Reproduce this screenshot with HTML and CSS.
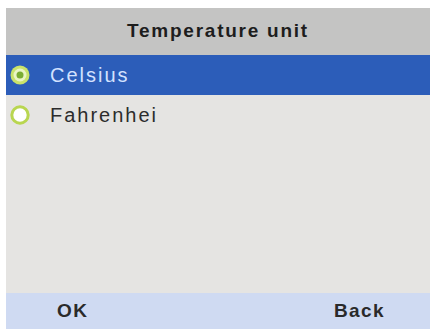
FILE: index.html
```html
<!DOCTYPE html>
<html>
<head>
<meta charset="utf-8">
<link rel="stylesheet" href="styles.css">
</head>
<body>
<div class="screen">
  <div class="header">Temperature unit</div>
  <div class="list">
    <div class="row selected">
      <svg class="radio" width="22" height="22" viewBox="0 0 22 22">
        <circle cx="11" cy="11" r="9.5" fill="#c9e36a"/>
        <circle cx="11" cy="11" r="6.5" fill="#e9f5c4"/>
        <circle cx="11" cy="11" r="3.5" fill="#7aad33"/>
      </svg>
      <span class="label">Celsius</span>
    </div>
    <div class="row">
      <svg class="radio" width="22" height="22" viewBox="0 0 22 22">
        <circle cx="11" cy="11" r="8.2" fill="#ffffff" stroke="#b9d650" stroke-width="3"/>
      </svg>
      <span class="label">Fahrenhei</span>
    </div>
  </div>
  <div class="footer">
    <span class="softkey">OK</span>
    <span class="softkey">Back</span>
  </div>
</div>
</body>
</html>
```

FILE: styles.css
```css
html, body {
  margin: 0;
  padding: 0;
  background: #ffffff;
}
body {
  width: 434px;
  height: 329px;
  overflow: hidden;
}
.screen {
  margin: 8px 4px 0 6px;
  height: 321px;
  display: flex;
  flex-direction: column;
  background: #e5e4e2;
  font-family: "Liberation Sans", Arial, sans-serif;
}
.header {
  height: 47px;
  background: #c4c4c3;
  display: flex;
  align-items: center;
  justify-content: center;
  font-size: 19px;
  font-weight: bold;
  letter-spacing: 1.75px;
  color: #1d1d1d;
  padding-bottom: 1px;
  box-sizing: border-box;
}
.list {
  flex: 1;
  display: flex;
  flex-direction: column;
}
.row {
  height: 40px;
  display: flex;
  align-items: center;
  padding-left: 3px;
  color: #2c2c2c;
}
.row.selected {
  background: #2c5db9;
  color: #d3e2ff;
}
.radio {
  flex: none;
}
.label {
  margin-left: 19px;
  font-size: 20px;
  letter-spacing: 2px;
}
.footer {
  height: 36px;
  background: #cfdaf2;
  display: flex;
  align-items: center;
  justify-content: space-between;
  padding: 0 45px 0 51px;
  font-size: 19px;
  font-weight: bold;
  letter-spacing: 1.4px;
  color: #2a2a2a;
}
```
